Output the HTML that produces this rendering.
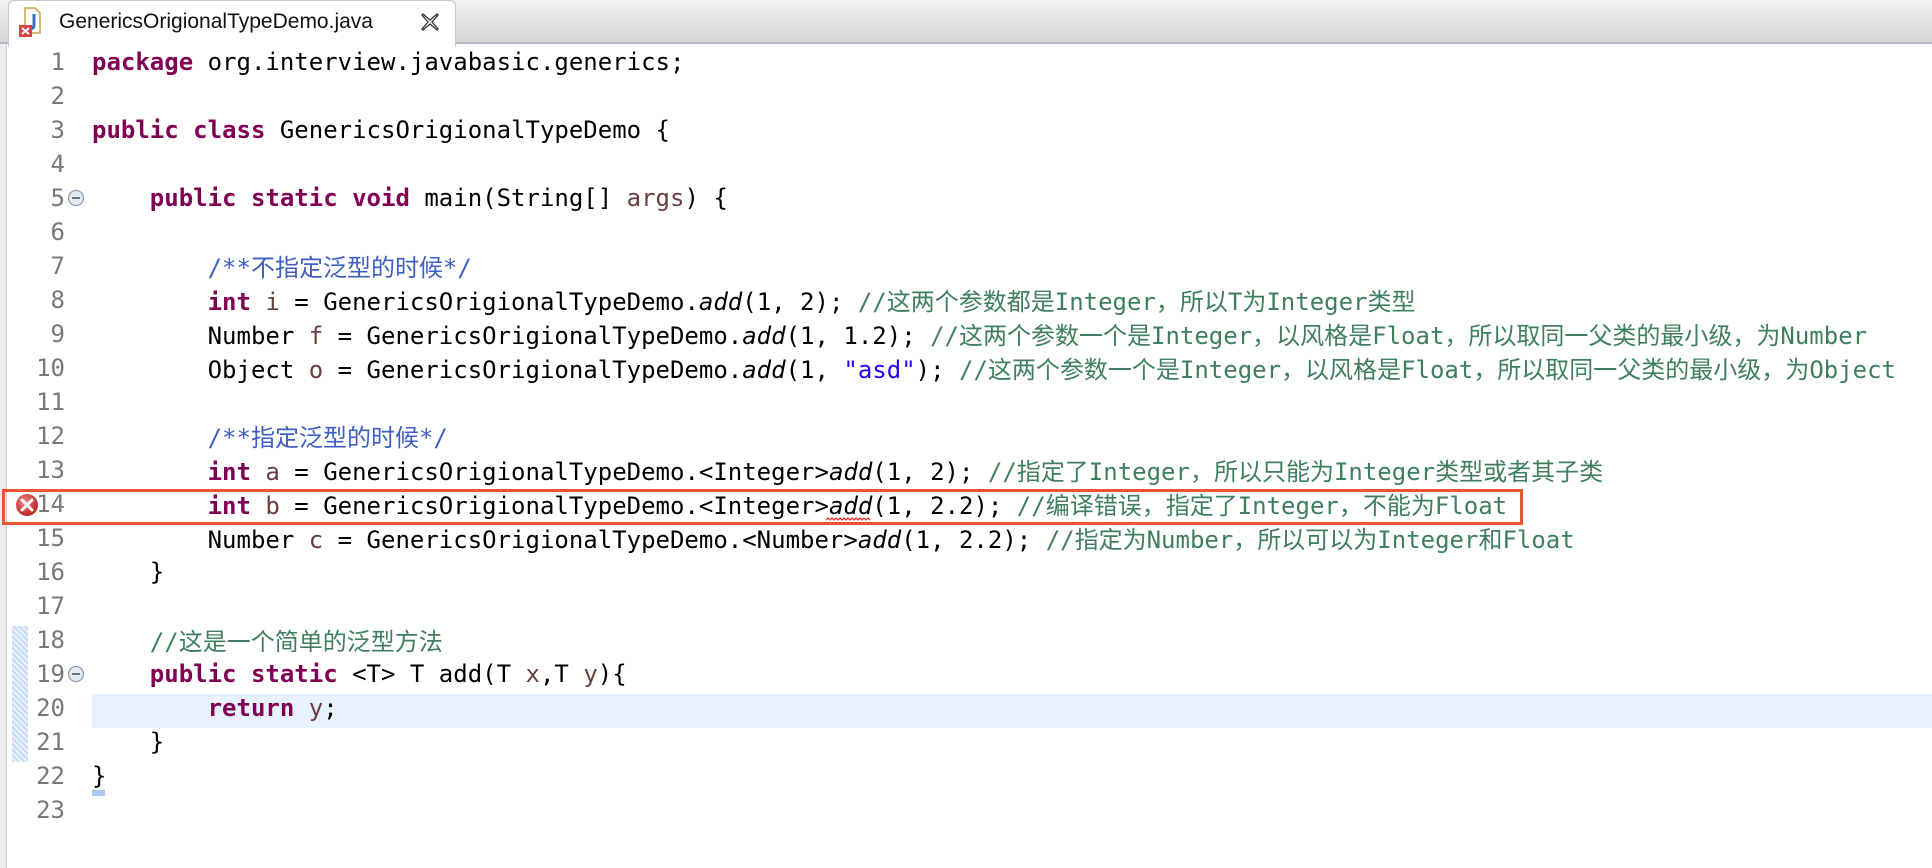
<!DOCTYPE html>
<html><head><meta charset="utf-8">
<style>
html,body{margin:0;padding:0;width:1932px;height:868px;overflow:hidden;background:#fff;}
#bar{position:absolute;left:0;top:0;width:1932px;height:42px;background:linear-gradient(#f1f1f1,#d7d7d7);border-bottom:2px solid #b3b8c8;}
#tab{position:absolute;left:8px;top:0;width:446px;height:46px;background:#fff;border:1px solid #c8c8c8;border-bottom:none;border-radius:6px 6px 0 0;}
#tab .t{position:absolute;left:50px;top:9px;font:21px "Liberation Sans",sans-serif;color:#111;}
#edge{position:absolute;left:0;top:44px;width:6px;height:824px;background:#ececec;border-right:1px solid #d0d0d0;}
.ln{position:absolute;left:0;width:65px;text-align:right;font:24px "DejaVu Sans Mono",monospace;color:#787878;height:34px;line-height:34px;}
.cd{position:absolute;left:92px;white-space:pre;font:24px "DejaVu Sans Mono","Noto Sans CJK SC",monospace;color:#000;height:34px;line-height:34px;}
.k{color:#7f0055;font-weight:bold}
.c{color:#3f7f5f}
.j{color:#3f5fbf}
.s{color:#2a00ff}
.v{color:#6a3e3e}
.i{font-style:italic}
.cj{font-family:"Noto Sans CJK SC",sans-serif;}
</style></head><body>
<div id="bar"></div>
<div id="tab">
<svg style="position:absolute;left:8px;top:5px" width="30" height="32" viewBox="0 0 30 32">
<path d="M8 2h10l5 5v20H8z" fill="#fff" stroke="#c9a24a" stroke-width="1.5"/>
<path d="M17 8v11c0 3-2 4-5 4" fill="none" stroke="#3a6fc0" stroke-width="3"/>
<rect x="2" y="19" width="13" height="12" fill="#d64545"/>
<path d="M5 22l7 6M12 22l-7 6" stroke="#fff" stroke-width="2"/>
</svg>
<span class="t">GenericsOrigionalTypeDemo.java</span>
<svg style="position:absolute;left:411px;top:11px" width="20" height="20" viewBox="0 0 20 20">
<path d="M3 2l7 6 7-6 1 1-6 7 6 7-1 1-7-6-7 6-1-1 6-7-6-7z" fill="none" stroke="#333" stroke-width="1.3"/>
</svg>
</div>
<div id="edge"></div>

<div style="position:absolute;left:92px;top:694px;width:1840px;height:34px;background:#e8f2fe"></div>
<div style="position:absolute;left:12px;top:626px;width:16px;height:136px;background:repeating-linear-gradient(45deg,#c6daf3 0 2px,#eaf2fc 2px 4px);"></div>
<div style="position:absolute;left:92px;top:790px;width:13px;height:6px;background:#a9c9f0"></div>

<div class="ln" style="top:45px">1</div><div class="cd" style="top:45px"><span class="k">package</span> org.interview.javabasic.generics;</div>
<div class="ln" style="top:79px">2</div>
<div class="ln" style="top:113px">3</div><div class="cd" style="top:113px"><span class="k">public</span> <span class="k">class</span> GenericsOrigionalTypeDemo {</div>
<div class="ln" style="top:147px">4</div>
<div class="ln" style="top:181px">5</div><div class="cd" style="top:181px">    <span class="k">public</span> <span class="k">static</span> <span class="k">void</span> main(String[] <span class="v">args</span>) {</div>
<div class="ln" style="top:215px">6</div>
<div class="ln" style="top:249px">7</div><div class="cd" style="top:249px">        <span class="j">/**<span class="cj">不指定泛型的时候</span>*/</span></div>
<div class="ln" style="top:283px">8</div><div class="cd" style="top:283px">        <span class="k">int</span> <span class="v">i</span> = GenericsOrigionalTypeDemo.<span class="i">add</span>(1, 2); <span class="c">//<span class="cj">这两个参数都是</span>Integer<span class="cj">，所以</span>T<span class="cj">为</span>Integer<span class="cj">类型</span></span></div>
<div class="ln" style="top:317px">9</div><div class="cd" style="top:317px">        Number <span class="v">f</span> = GenericsOrigionalTypeDemo.<span class="i">add</span>(1, 1.2); <span class="c">//<span class="cj">这两个参数一个是</span>Integer<span class="cj">，以风格是</span>Float<span class="cj">，所以取同一父类的最小级，为</span>Number</span></div>
<div class="ln" style="top:351px">10</div><div class="cd" style="top:351px">        Object <span class="v">o</span> = GenericsOrigionalTypeDemo.<span class="i">add</span>(1, <span class="s">"asd"</span>); <span class="c">//<span class="cj">这两个参数一个是</span>Integer<span class="cj">，以风格是</span>Float<span class="cj">，所以取同一父类的最小级，为</span>Object</span></div>
<div class="ln" style="top:385px">11</div>
<div class="ln" style="top:419px">12</div><div class="cd" style="top:419px">        <span class="j">/**<span class="cj">指定泛型的时候</span>*/</span></div>
<div class="ln" style="top:453px">13</div><div class="cd" style="top:453px">        <span class="k">int</span> <span class="v">a</span> = GenericsOrigionalTypeDemo.&lt;Integer&gt;<span class="i">add</span>(1, 2); <span class="c">//<span class="cj">指定了</span>Integer<span class="cj">，所以只能为</span>Integer<span class="cj">类型或者其子类</span></span></div>
<div class="ln" style="top:487px">14</div><div class="cd" style="top:487px">        <span class="k">int</span> <span class="v">b</span> = GenericsOrigionalTypeDemo.&lt;Integer&gt;<span class="i">add</span>(1, 2.2); <span class="c">//<span class="cj">编译错误，指定了</span>Integer<span class="cj">，不能为</span>Float</span></div>
<div class="ln" style="top:521px">15</div><div class="cd" style="top:521px">        Number <span class="v">c</span> = GenericsOrigionalTypeDemo.&lt;Number&gt;<span class="i">add</span>(1, 2.2); <span class="c">//<span class="cj">指定为</span>Number<span class="cj">，所以可以为</span>Integer<span class="cj">和</span>Float</span></div>
<div class="ln" style="top:555px">16</div><div class="cd" style="top:555px">    }</div>
<div class="ln" style="top:589px">17</div>
<div class="ln" style="top:623px">18</div><div class="cd" style="top:623px">    <span class="c">//<span class="cj">这是一个简单的泛型方法</span></span></div>
<div class="ln" style="top:657px">19</div><div class="cd" style="top:657px">    <span class="k">public</span> <span class="k">static</span> &lt;T&gt; T add(T <span class="v">x</span>,T <span class="v">y</span>){</div>
<div class="ln" style="top:691px">20</div><div class="cd" style="top:691px">        <span class="k">return</span> <span class="v">y</span>;</div>
<div class="ln" style="top:725px">21</div><div class="cd" style="top:725px">    }</div>
<div class="ln" style="top:759px">22</div><div class="cd" style="top:759px">}</div>
<div class="ln" style="top:793px">23</div>

<svg style="position:absolute;left:67px;top:189px" width="18" height="18" viewBox="0 0 18 18"><circle cx="9" cy="9" r="7.5" fill="#e6ebf2" stroke="#8a9ab0" stroke-width="1.2"/><path d="M5 9h8" stroke="#4a5a70" stroke-width="1.6"/></svg>
<svg style="position:absolute;left:67px;top:665px" width="18" height="18" viewBox="0 0 18 18"><circle cx="9" cy="9" r="7.5" fill="#e6ebf2" stroke="#8a9ab0" stroke-width="1.2"/><path d="M5 9h8" stroke="#4a5a70" stroke-width="1.6"/></svg>

<svg style="position:absolute;left:826px;top:516px" width="44" height="6" viewBox="0 0 44 6"><path d="M0 4l2-2 2 2 2-2 2 2 2-2 2 2 2-2 2 2 2-2 2 2 2-2 2 2 2-2 2 2 2-2 2 2 2-2 2 2 2-2 2 2 2-2 2 2" fill="none" stroke="#e03030" stroke-width="1.3"/></svg>

<div style="position:absolute;left:2px;top:489px;width:1515px;height:30px;border:3px solid #ea5430;"></div>
<svg style="position:absolute;left:15px;top:493px" width="24" height="24" viewBox="0 0 24 24"><defs><radialGradient id="g" cx="40%" cy="35%" r="65%"><stop offset="0" stop-color="#e88"/><stop offset="1" stop-color="#b22"/></radialGradient></defs><circle cx="12" cy="12" r="11" fill="url(#g)"/><path d="M7 7l10 10M17 7L7 17" stroke="#fff" stroke-width="3" stroke-linecap="round"/></svg>
</body></html>
